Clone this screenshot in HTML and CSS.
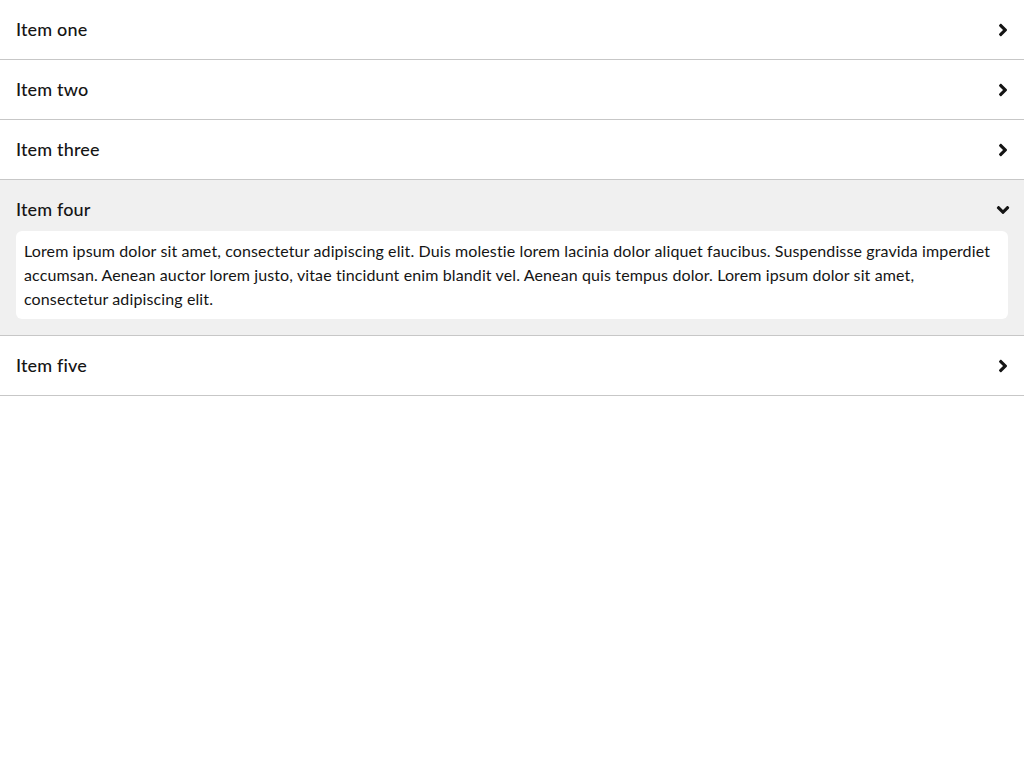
FILE: index.html
```html
<!DOCTYPE html>
<html lang="en">
<head>
<meta charset="utf-8">
<title>Accordion</title>
<link rel="stylesheet" href="styles.css">
</head>
<body>
<div class="accordion">
  <div class="item">
    <button class="toggle"><span class="title">Item one</span><span class="icon"><svg viewBox="0 0 256 512"><path d="M224.3 273l-136 136c-9.4 9.4-24.6 9.4-33.9 0l-22.6-22.6c-9.4-9.4-9.4-24.6 0-33.9l96.4-96.4-96.4-96.4c-9.4-9.4-9.4-24.6 0-33.9L54.3 103c9.4-9.4 24.6-9.4 33.9 0l136 136c9.5 9.4 9.5 24.6.1 34z"/></svg></span></button>
  </div>
  <div class="item">
    <button class="toggle"><span class="title">Item two</span><span class="icon"><svg viewBox="0 0 256 512"><path d="M224.3 273l-136 136c-9.4 9.4-24.6 9.4-33.9 0l-22.6-22.6c-9.4-9.4-9.4-24.6 0-33.9l96.4-96.4-96.4-96.4c-9.4-9.4-9.4-24.6 0-33.9L54.3 103c9.4-9.4 24.6-9.4 33.9 0l136 136c9.5 9.4 9.5 24.6.1 34z"/></svg></span></button>
  </div>
  <div class="item">
    <button class="toggle"><span class="title">Item three</span><span class="icon"><svg viewBox="0 0 256 512"><path d="M224.3 273l-136 136c-9.4 9.4-24.6 9.4-33.9 0l-22.6-22.6c-9.4-9.4-9.4-24.6 0-33.9l96.4-96.4-96.4-96.4c-9.4-9.4-9.4-24.6 0-33.9L54.3 103c9.4-9.4 24.6-9.4 33.9 0l136 136c9.5 9.4 9.5 24.6.1 34z"/></svg></span></button>
  </div>
  <div class="item expanded">
    <button class="toggle"><span class="title">Item four</span><span class="icon"><svg viewBox="0 0 256 512"><path d="M224.3 273l-136 136c-9.4 9.4-24.6 9.4-33.9 0l-22.6-22.6c-9.4-9.4-9.4-24.6 0-33.9l96.4-96.4-96.4-96.4c-9.4-9.4-9.4-24.6 0-33.9L54.3 103c9.4-9.4 24.6-9.4 33.9 0l136 136c9.5 9.4 9.5 24.6.1 34z"/></svg></span></button>
    <div class="content">
      <div class="body">Lorem ipsum dolor sit amet, consectetur adipiscing elit. Duis molestie lorem lacinia dolor aliquet faucibus. Suspendisse gravida imperdiet accumsan. Aenean auctor lorem justo, vitae tincidunt enim blandit vel. Aenean quis tempus dolor. Lorem ipsum dolor sit amet, consectetur adipiscing elit.</div>
    </div>
  </div>
  <div class="item">
    <button class="toggle"><span class="title">Item five</span><span class="icon"><svg viewBox="0 0 256 512"><path d="M224.3 273l-136 136c-9.4 9.4-24.6 9.4-33.9 0l-22.6-22.6c-9.4-9.4-9.4-24.6 0-33.9l96.4-96.4-96.4-96.4c-9.4-9.4-9.4-24.6 0-33.9L54.3 103c9.4-9.4 24.6-9.4 33.9 0l136 136c9.5 9.4 9.5 24.6.1 34z"/></svg></span></button>
  </div>
</div>
</body>
</html>
```

FILE: styles.css
```css
html, body {
  margin: 0;
  padding: 0;
  background: #ffffff;
}

body {
  font-family: "Lato", "Noto Sans", sans-serif;
  color: #151515;
}

.accordion {
  display: flex;
  flex-direction: column;
}

.item {
  border-bottom: 1px solid #c7c7c7;
  padding-bottom: 8px;
}

.item.expanded {
  background: #f0f0f0;
  padding-bottom: 16px;
}

.toggle {
  display: flex;
  align-items: center;
  justify-content: space-between;
  width: 100%;
  margin: 0;
  padding: 16px 16px 8px 16px;
  border: 0;
  background: transparent;
  font: inherit;
  color: inherit;
  text-align: left;
  cursor: pointer;
}

.title {
  font-size: 18px;
  line-height: 27px;
  font-weight: 500;
  letter-spacing: 0.15px;
}

.icon {
  display: flex;
  align-items: center;
  justify-content: center;
  width: 10px;
  height: 20px;
}

.icon svg {
  width: 10px;
  height: 20px;
  fill: #151515;
}

.expanded .icon {
  transform: rotate(90deg);
}

.content {
  padding: 0 16px;
}

.body {
  background: #ffffff;
  border-radius: 6px;
  padding: 8px;
  font-size: 16px;
  line-height: 24px;
  letter-spacing: 0.12px;
}
```
